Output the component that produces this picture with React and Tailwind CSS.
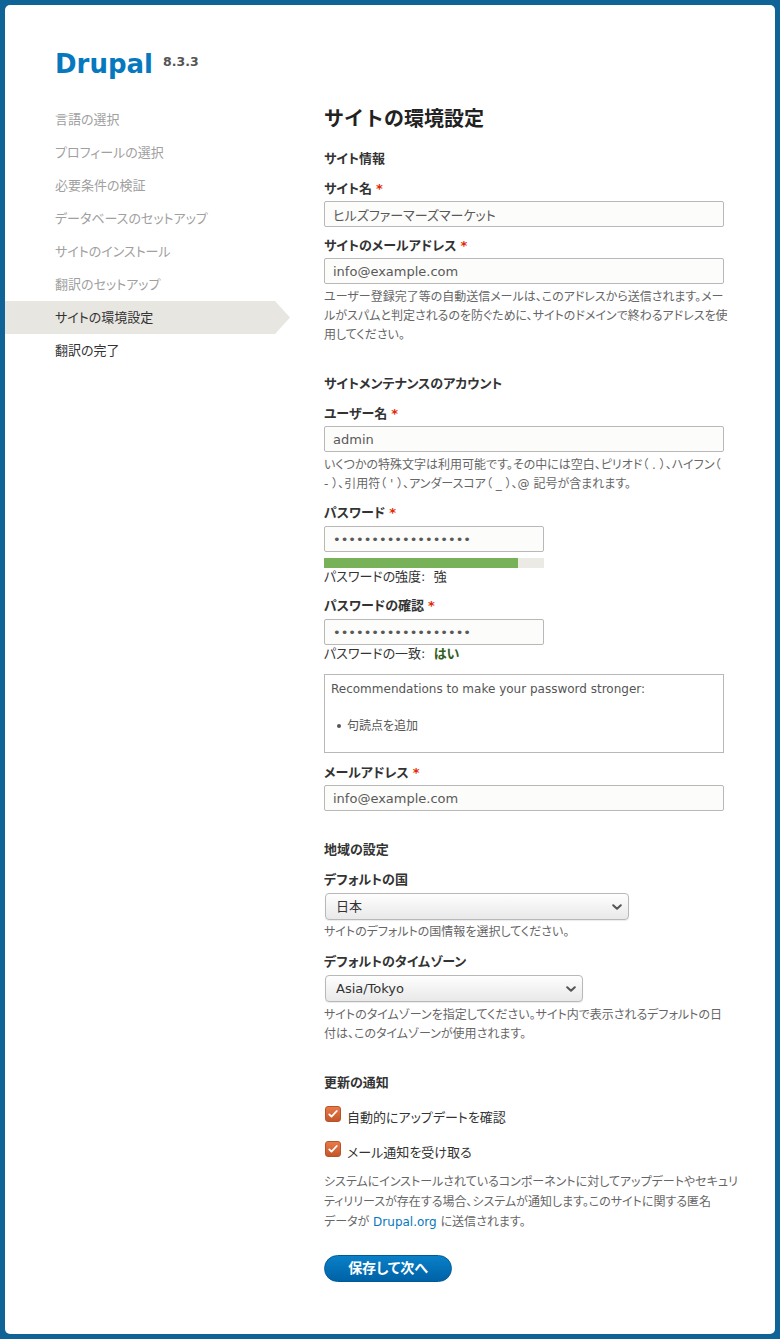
const steps = [
  { label: "言語の選択", state: "done" },
  { label: "プロフィールの選択", state: "done" },
  { label: "必要条件の検証", state: "done" },
  { label: "データベースのセットアップ", state: "done" },
  { label: "サイトのインストール", state: "done" },
  { label: "翻訳のセットアップ", state: "done" },
  { label: "サイトの環境設定", state: "active" },
  { label: "翻訳の完了", state: "todo" },
];

const Label = ({ children, required, className = "" }) => (
  <div className={`text-[13px] leading-[20px] font-bold text-[#333] ${className}`}>
    {children}
    {required && <span className="text-[#e32700] ml-[4px]">*</span>}
  </div>
);

const TextInput = ({ value, type = "text", className = "" }) => (
  <input
    type={type}
    defaultValue={value}
    readOnly
    className={`block h-[26px] border border-[#b8b8b8] rounded-[2px] bg-[#fcfcfa] px-[8px] text-[13px] text-[#595959] outline-none [font-feature-settings:'palt'] ${className}`}
  />
);

const Description = ({ children, className = "" }) => (
  <div className={`text-[12px] leading-[19px] text-[#666] whitespace-nowrap ${className}`}>{children}</div>
);

const SelectBox = ({ value, className = "" }) => (
  <div
    className={`flex items-center justify-between h-[27px] border border-[#b8b8b8] rounded-[4px] bg-gradient-to-b from-[#fefefe] to-[#e9e9e9] pl-[10px] pr-[6px] text-[13px] text-[#333] shadow-[0_1px_1px_rgba(0,0,0,0.08)] ${className}`}
  >
    <span>{value}</span>
    <svg viewBox="0 0 10 6" className="w-[10px] h-[6px]" fill="none" stroke="#555" strokeWidth="2" strokeLinecap="round" strokeLinejoin="round">
      <path d="M1.2 1.2l3.8 3.6 3.8-3.6" />
    </svg>
  </div>
);

const Checkbox = ({ label, className = "" }) => (
  <div className={`flex items-start gap-[6px] ${className}`}>
    <div className="w-[16px] h-[16px] rounded-[3px] bg-gradient-to-b from-[#e8794a] to-[#c4572a] border border-[#b5532a] flex items-center justify-center">
      <svg viewBox="0 0 16 16" className="w-[12px] h-[12px]" fill="none" stroke="white" strokeWidth="2.4" strokeLinecap="round" strokeLinejoin="round">
        <path d="M3 8.5l3 3 7-7.5" />
      </svg>
    </div>
    <span className="text-[13px] leading-[20px] text-[#333] mt-[2px]">{label}</span>
  </div>
);

export default function App() {
  return (
    <div
      className="min-h-screen bg-[#0f6397] p-[5px] [font-feature-settings:'palt']"
      style={{ fontFamily: '"DejaVu Sans", "Noto Sans CJK JP", sans-serif' }}
    >
      <div className="bg-white rounded-[5px] min-h-[1329px] flex">
        {/* Sidebar */}
        <div className="w-[319px] shrink-0">
          <div className="pl-[50px] pt-[42px] flex items-start">
            <span className="text-[26px] leading-[34px] font-bold text-[#0678be]">Drupal</span>
            <span className="ml-[10px] mt-[7px] text-[12.5px] leading-[16px] font-bold text-[#555]">8.3.3</span>
          </div>
          <ul className="mt-[22px]">
            {steps.map((s) => (
              <li
                key={s.label}
                className={`h-[33px] flex items-center pl-[50px] text-[13px] ${
                  s.state === "done" ? "text-[#a0a0a0]" : "text-[#333]"
                } ${
                  s.state === "active"
                    ? "w-[285px] bg-[#e8e6e1] [clip-path:polygon(0_0,270px_0,100%_50%,270px_100%,0_100%)]"
                    : ""
                }`}
              >
                {s.label}
              </li>
            ))}
          </ul>
        </div>

        {/* Main */}
        <div className="w-[400px] pt-[102px] pb-[52px]">
          <h1 className="text-[20px] leading-[24px] font-bold text-[#222] [font-feature-settings:normal]">サイトの環境設定</h1>

          <Label className="mt-[18px]">サイト情報</Label>
          <Label required className="mt-[10px]">サイト名</Label>
          <TextInput value="ヒルズファーマーズマーケット" className="mt-[2px] w-[400px]" />
          <Label required className="mt-[9px]">サイトのメールアドレス</Label>
          <TextInput value="info@example.com" className="mt-[2px] w-[400px]" />
          <Description className="mt-[4px]">
            ユーザー登録完了等の自動送信メールは、このアドレスから送信されます。メー
            <br />
            ルがスパムと判定されるのを防ぐために、サイトのドメインで終わるアドレスを使
            <br />
            用してください。
          </Description>

          <Label className="mt-[29px]">サイトメンテナンスのアカウント</Label>
          <Label required className="mt-[10px]">ユーザー名</Label>
          <TextInput value="admin" className="mt-[2px] w-[400px]" />
          <Description className="mt-[4px]">
            いくつかの特殊文字は利用可能です。その中には空白、ピリオド（ . ）、ハイフン（
            <br />- ）、引用符（ ' ）、アンダースコア（ _ ）、@ 記号が含まれます。
          </Description>

          <Label required className="mt-[9px]">パスワード</Label>
          <TextInput type="password" value="abcdefghijklmnopqr" className="mt-[3px] w-[220px]" />
          <div className="mt-[6px] w-[220px] h-[10px] bg-[#ebeae4]">
            <div className="h-full bg-[#77b259]" style={{ width: "88%" }} />
          </div>
          <div className="text-[13px] leading-[18px] text-[#333]">パスワードの強度:&nbsp; 強</div>

          <Label required className="mt-[10px]">パスワードの確認</Label>
          <TextInput type="password" value="abcdefghijklmnopqr" className="mt-[3px] w-[220px]" />
          <div className="text-[13px] leading-[18px] text-[#333]">
            パスワードの一致:&nbsp; <span className="font-bold text-[#325e1c]">はい</span>
          </div>

          <div className="mt-[11px] h-[79px] border border-[#b8b8b8] px-[6px] pt-[5px]">
            <div className="text-[12px] leading-[18px] text-[#555]">
              Recommendations to make your password stronger:
            </div>
            <ul className="mt-[19px] pl-[6px]">
              <li className="flex items-center gap-[6px] text-[12px] leading-[18px] text-[#555]">
                <span className="w-[4px] h-[4px] rounded-full bg-[#555]" />
                句読点を追加
              </li>
            </ul>
          </div>

          <Label required className="mt-[10px]">メールアドレス</Label>
          <TextInput value="info@example.com" className="mt-[2px] w-[400px]" />

          <Label className="mt-[29px]">地域の設定</Label>
          <Label className="mt-[10px]">デフォルトの国</Label>
          <SelectBox value="日本" className="mt-[3px] w-[304px] ml-[1px]" />
          <Description className="mt-[3px]">サイトのデフォルトの国情報を選択してください。</Description>

          <Label className="mt-[10px]">デフォルトのタイムゾーン</Label>
          <SelectBox value="Asia/Tokyo" className="mt-[3px] w-[258px] ml-[1px]" />
          <Description className="mt-[4px]">
            サイトのタイムゾーンを指定してください。サイト内で表示されるデフォルトの日
            <br />
            付は、このタイムゾーンが使用されます。
          </Description>

          <Label className="mt-[29px]">更新の通知</Label>
          <Checkbox label="自動的にアップデートを確認" className="mt-[13px] ml-[1px]" />
          <Checkbox label="メール通知を受け取る" className="mt-[13px] ml-[1px]" />
          <div className="mt-[9px] text-[12px] leading-[20px] text-[#666] whitespace-nowrap">
            システムにインストールされているコンポーネントに対してアップデートやセキュリ
            <br />
            ティリリースが存在する場合、システムが通知します。このサイトに関する匿名
            <br />
            データが <a className="text-[#0678be]">Drupal.org</a> に送信されます。
          </div>

          <button className="mt-[23px] h-[27px] w-[128px] rounded-full bg-gradient-to-b from-[#0a80c9] to-[#0062a6] border border-[#005a96] text-white text-[14px] font-bold">
            保存して次へ
          </button>
        </div>
      </div>
    </div>
  );
}
